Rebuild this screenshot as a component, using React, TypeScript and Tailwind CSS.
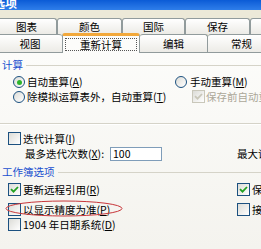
import React from "react";

function Box({ checked = false, disabled = false }: { checked?: boolean; disabled?: boolean }) {
  return (
    <span
      className={`w-[13px] h-[13px] border shrink-0 flex items-center justify-center bg-gradient-to-br from-[#DCDCD7] to-white ${
        disabled ? "border-[#C9C7BA]" : "border-[#1C5180]"
      }`}
    >
      {checked && (
        <svg width="9" height="9" viewBox="0 0 9 9">
          <path d="M1 4.2 L3.5 6.7 L8 2" stroke={disabled ? "#C9C7BA" : "#21A121"} strokeWidth="1.8" fill="none" />
        </svg>
      )}
    </span>
  );
}

function Radio({ checked = false }: { checked?: boolean }) {
  return (
    <span className="w-[12px] h-[12px] rounded-full border border-[#1C5180] shrink-0 flex items-center justify-center bg-gradient-to-br from-[#DCDCD7] to-white">
      {checked && <span className="w-[5px] h-[5px] rounded-full bg-[#2DB52D]" />}
    </span>
  );
}

function Tab({ w, label }: { w: number; label: string }) {
  return (
    <div
      style={{ width: w }}
      className="h-full shrink-0 border-t border-r border-l border-[#919B9C] rounded-t-[3px] bg-gradient-to-b from-white to-[#ECEBE6] flex items-center justify-center"
    >
      <span className="leading-[12px]">{label}</span>
    </div>
  );
}

export default function App() {
  return (
    <div className="w-[261px] h-[249px] overflow-hidden bg-[#ECE9D8] text-[10.5px] text-black font-['Noto_Sans_CJK_SC','Noto_Sans',sans-serif] relative">
      {/* title bar */}
      <div className="h-[10px] bg-gradient-to-b from-[#0A5BD6] to-[#2E7EEA] overflow-hidden">
        <div className="ml-[-7px] mt-[-4px] text-white font-bold text-[12px] leading-[14px] whitespace-nowrap">选项</div>
      </div>
      {/* tabs row 1 */}
      <div className="h-[8px]" />
      <div className="h-[16px] flex ml-[-4px]">
        <Tab w={61} label="图表" />
        <Tab w={65} label="颜色" />
        <Tab w={63} label="国际" />
        <Tab w={65} label="保存" />
        <Tab w={40} label="" />
      </div>
      {/* tabs row 2 */}
      <div className="h-[18px] flex ml-[-3px] items-end relative">
        <div className="w-[65px] h-[18px] shrink-0 border-t border-l border-[#919B9C] rounded-t-[3px] bg-gradient-to-b from-white to-[#ECEBE6] flex items-center justify-center">
          视图
        </div>
        <div className="w-[78px] h-[20px] shrink-0 mt-[-2px] border-t-[3px] border-t-[#F2A83A] border-x border-x-[#919B9C] rounded-t-[3px] bg-[#FCFCFA] flex items-center justify-center relative z-10 mb-[-1px]">
          <div className="w-[72px] h-[13px] border border-dotted border-[#555] flex items-center justify-center">
            重新计算
          </div>
        </div>
        <div className="w-[68px] h-[18px] shrink-0 border-t border-r border-[#919B9C] rounded-t-[3px] bg-gradient-to-b from-white to-[#ECEBE6] flex items-center justify-center">
          编辑
        </div>
        <div className="w-[68px] h-[18px] shrink-0 border-t border-r border-[#919B9C] rounded-t-[3px] bg-gradient-to-b from-white to-[#ECEBE6] flex items-center justify-center">
          常规
        </div>
      </div>
      {/* panel */}
      <div className="h-[197px] bg-gradient-to-b from-[#FCFCFA] to-[#F4F3EE] border-t border-[#919B9C] flex flex-col leading-[12px]">
        {/* group 计算 */}
        <div className="mt-[5px] h-[14px] flex items-center pl-[2px]">
          <span className="text-[#1A4FCF]">计算</span>
          <span className="flex-1 h-px bg-[#D5D3C8] ml-[3px]" />
        </div>
        <div className="mt-[4px] h-[12px] flex items-center">
          <div className="w-[175px] flex items-center pl-[13px] gap-[1px] shrink-0">
            <Radio checked />
            <span className="ml-[1px]">自动重算(<u>A</u>)</span>
          </div>
          <div className="flex items-center gap-[3px]">
            <Radio />
            <span>手动重算(<u>M</u>)</span>
          </div>
        </div>
        <div className="mt-[2px] h-[13px] flex items-center">
          <div className="w-[192px] flex items-center pl-[13px] gap-[1px] shrink-0">
            <Radio />
            <span className="ml-[1px]">除模拟运算表外，自动重算(<u>T</u>)</span>
          </div>
          <div className="flex items-center gap-[1px] text-[#ACA899] whitespace-nowrap">
            <Box checked disabled />
            <span>保存前自动重算(<u>W</u>)</span>
          </div>
        </div>
        {/* separator */}
        <div className="mt-[20px] h-px bg-[#D5D3C8]" />
        <div className="h-px bg-white" />
        <div className="mt-[7px] h-[13px] flex items-center pl-[8px] gap-[2px]">
          <Box />
          <span>迭代计算(<u>I</u>)</span>
        </div>
        <div className="mt-[2px] h-[14px] flex items-center">
          <div className="w-[237px] flex items-center pl-[25px] shrink-0">
            <span className="w-[85px]">最多迭代次数(<u>X</u>):</span>
            <div className="w-[52px] h-[14px] border border-[#7F9DB9] bg-white flex items-center pl-[2px]">100</div>
          </div>
          <span className="whitespace-nowrap">最大误差(<u>C</u>):</span>
        </div>
        {/* group 工作簿选项 */}
        <div className="mt-[5px] h-[12px] flex items-center pl-[2px]">
          <span className="text-[#1A4FCF]">工作簿选项</span>
          <span className="flex-1 h-px bg-[#D5D3C8] ml-[3px]" />
        </div>
        <div className="mt-[5px] h-[13px] flex items-center">
          <div className="w-[237px] flex items-center pl-[8px] gap-[2px] shrink-0">
            <Box checked />
            <span>更新远程引用(<u>R</u>)</span>
          </div>
          <div className="flex items-center gap-[2px] whitespace-nowrap">
            <Box checked />
            <span>保存外部链接值</span>
          </div>
        </div>
        <div className="mt-[7px] h-[13px] flex items-center relative">
          <div className="w-[237px] flex items-center pl-[8px] gap-[2px] shrink-0">
            <Box />
            <span>以显示精度为准(<u>P</u>)</span>
          </div>
          <div className="flex items-center gap-[2px] whitespace-nowrap">
            <Box />
            <span>接受公式标志</span>
          </div>
          <svg className="absolute left-[5px] top-[-3px]" width="118" height="17" viewBox="0 0 118 17">
            <ellipse cx="59" cy="8.5" rx="58" ry="7.5" fill="none" stroke="#C8363A" strokeWidth="1" />
          </svg>
        </div>
        <div className="mt-[2px] h-[13px] flex items-center pl-[8px] gap-[2px]">
          <Box />
          <span>1904 年日期系统(<u>D</u>)</span>
        </div>
      </div>
    </div>
  );
}
